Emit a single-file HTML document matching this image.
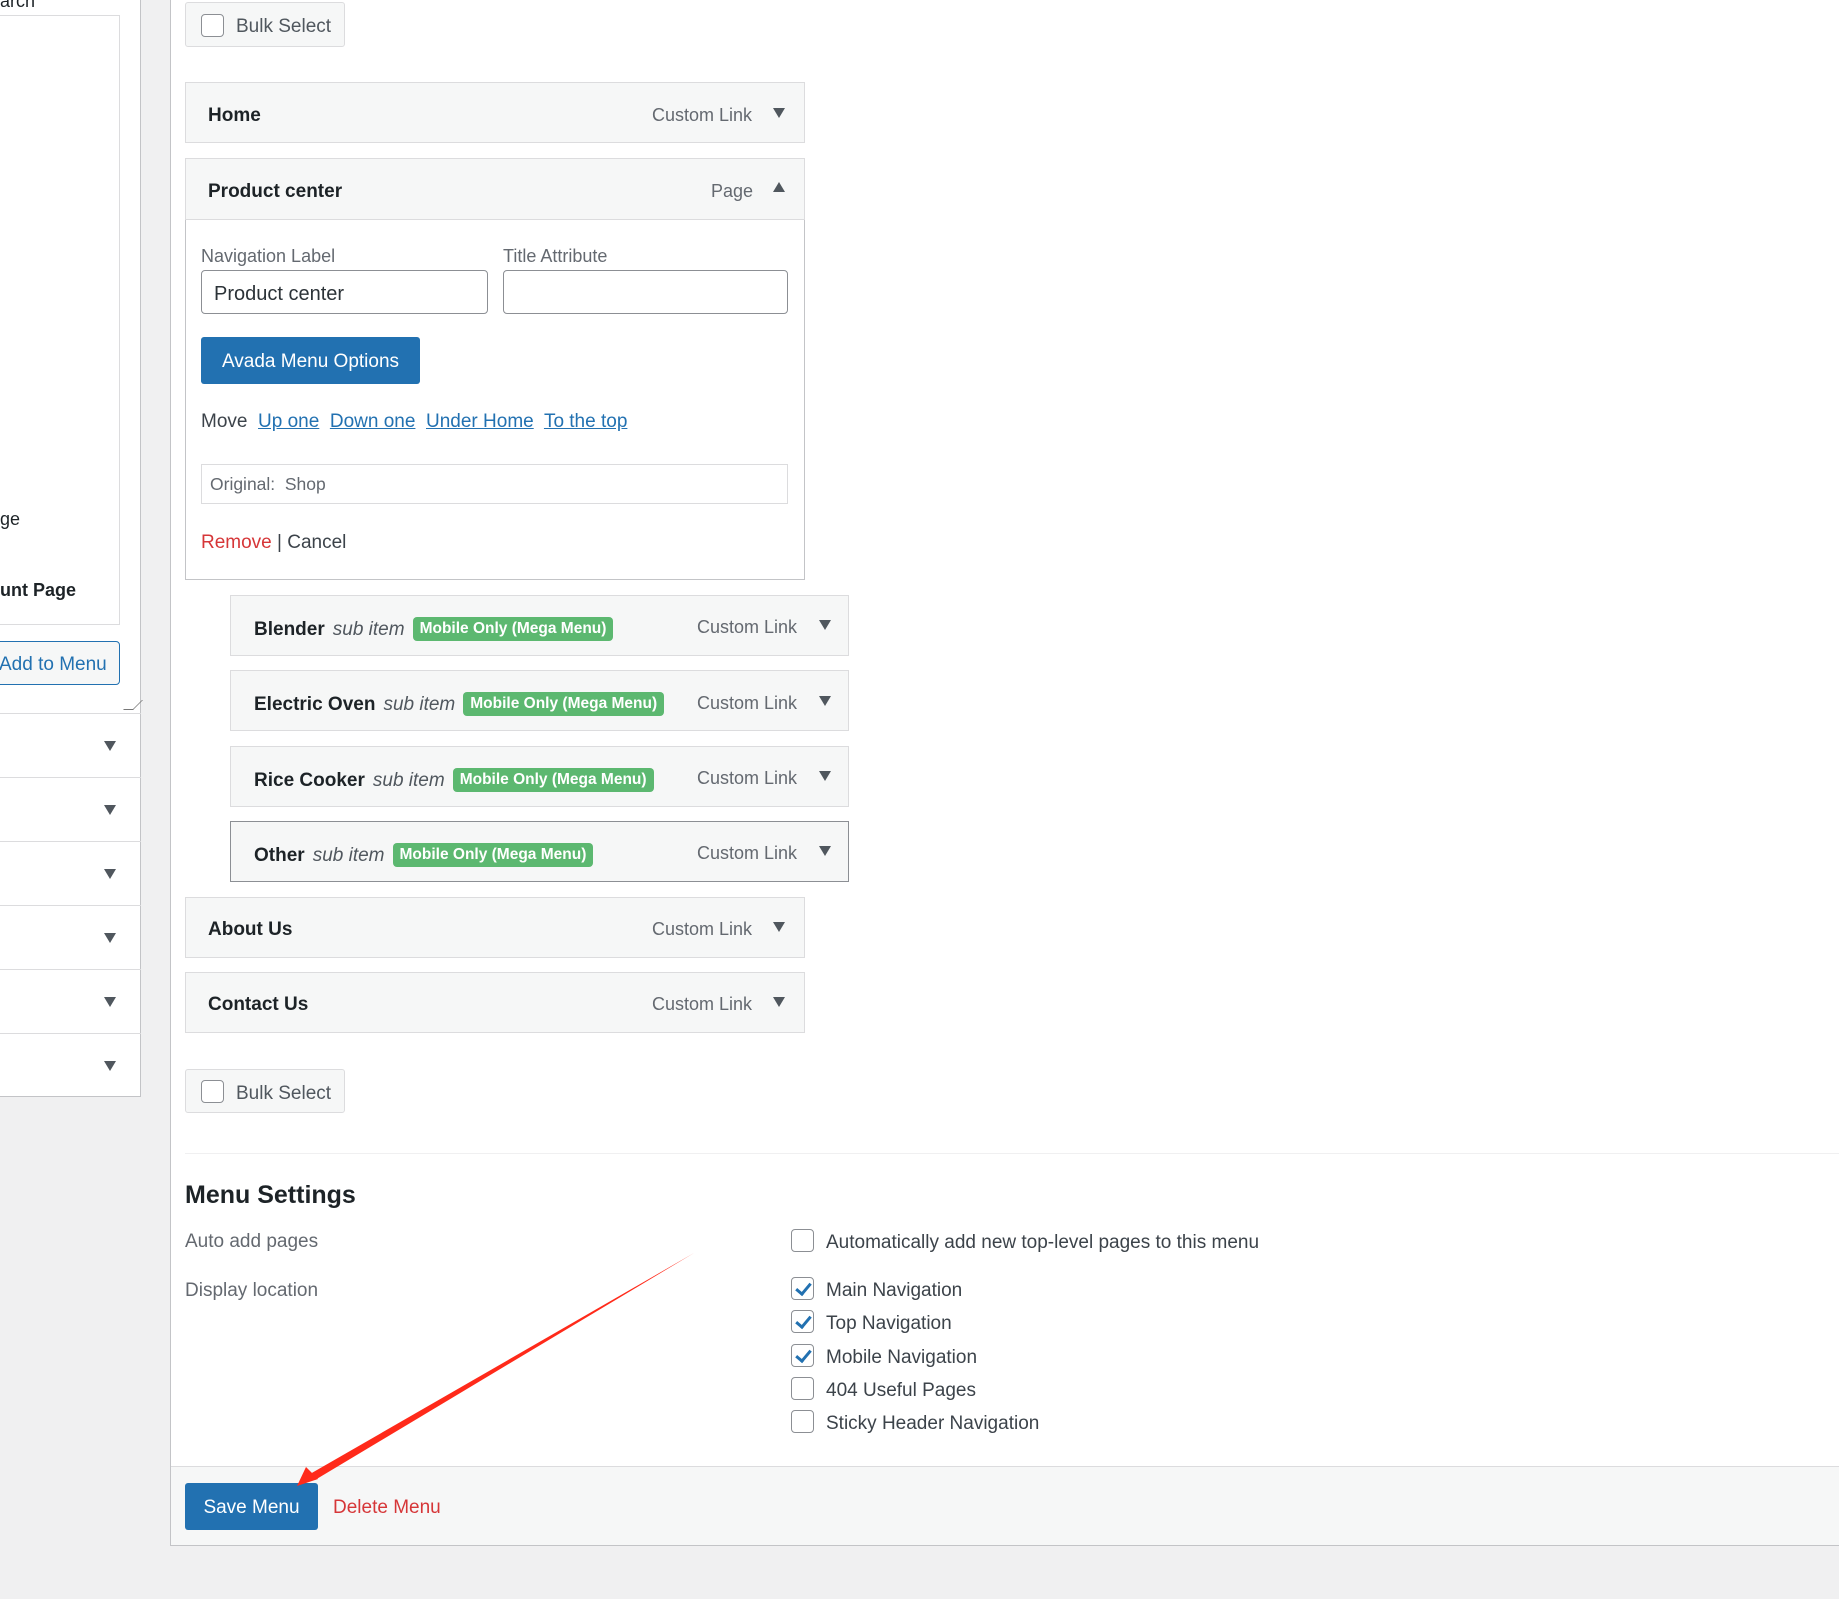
<!DOCTYPE html>
<html><head><meta charset="utf-8"><style>
*{box-sizing:border-box;margin:0;padding:0}
body{width:1839px;height:1599px;background:#f0f0f1;font-family:"Liberation Sans",sans-serif;color:#1d2327;position:relative;overflow:hidden;font-size:19px}
.a{position:absolute}
.t{transform:translateY(3px)}
.box{position:absolute;background:#f6f7f7;border:1px solid #dcdcde}
.ttl{position:absolute;font-weight:600;font-size:19px;color:#1d2327;transform:translateY(3px)}
.typ{position:absolute;color:#646970;font-size:18px;transform:translateY(2px)}
.arr{position:absolute;width:0;height:0;border-left:6px solid transparent;border-right:6px solid transparent;border-top:10px solid #50575e}
.up{border-top:0;border-bottom:10px solid #50575e}
.tag{display:inline-block;background:#5cb870;color:#fff;font-size:15.5px;font-weight:600;padding:3px 7px;border-radius:4px;vertical-align:2px;margin-left:8px}
.sub{font-style:italic;color:#50575e;font-weight:400;margin-left:8px}
.cb{position:absolute;width:23px;height:23px;border:1.5px solid #8c8f94;border-radius:4px;background:#fff}
.cb.on::after{content:"";position:absolute;left:7px;top:2px;width:6px;height:12px;border:solid #2271b1;border-width:0 3px 3px 0;transform:rotate(40deg)}
a{color:#2271b1}
</style></head><body>
<div class="a" style="left:0;top:0;width:141px;height:1097px;background:#fff;border-right:1px solid #c3c4c7;border-bottom:1px solid #c3c4c7"></div>
<div class="a" style="left:-2px;top:15px;width:122px;height:610px;border:1px solid #dcdcde;background:#fff"></div>
<div class="a t" style="left:0;top:-12px;font-size:18px;color:#1d2327">arch</div>
<div class="a t" style="left:0;top:506px;font-size:18px">ge</div>
<div class="a t" style="left:0;top:577px;font-size:18px;font-weight:600">unt Page</div>
<div class="a" style="left:-10px;top:641px;width:130px;height:44px;border:1px solid #2271b1;border-radius:4px;color:#2271b1;font-size:19px;line-height:46px;padding-left:8px;background:#f6f7f7">Add to Menu</div>
<div class="a" style="left:128px;top:700px;width:10px;height:10px;border-right:1px solid #777;border-bottom:1px solid #777;transform:skew(-45deg)"></div>
<div class="a" style="left:0;top:713px;width:141px;border-top:1px solid #dcdcde"></div>
<div class="a" style="left:0;top:777px;width:141px;border-top:1px solid #dcdcde"></div>
<div class="a" style="left:0;top:841px;width:141px;border-top:1px solid #dcdcde"></div>
<div class="a" style="left:0;top:905px;width:141px;border-top:1px solid #dcdcde"></div>
<div class="a" style="left:0;top:969px;width:141px;border-top:1px solid #dcdcde"></div>
<div class="a" style="left:0;top:1033px;width:141px;border-top:1px solid #dcdcde"></div>
<div class="arr" style="left:104px;top:741px"></div>
<div class="arr" style="left:104px;top:805px"></div>
<div class="arr" style="left:104px;top:869px"></div>
<div class="arr" style="left:104px;top:933px"></div>
<div class="arr" style="left:104px;top:997px"></div>
<div class="arr" style="left:104px;top:1061px"></div>

<div class="a" style="left:170px;top:0;width:1669px;height:1546px;background:#fff;border-left:1px solid #c3c4c7;border-bottom:1px solid #c3c4c7"></div>
<div class="box" style="left:185px;top:2px;width:160px;height:45px;border-radius:3px"></div>
<div class="cb" style="left:201px;top:14px"></div>
<div class="a t" style="left:236px;top:13px;color:#50575e">Bulk Select</div>

<div class="box" style="left:185px;top:82px;width:620px;height:61px"></div>
<div class="ttl" style="left:208px;top:102px">Home</div>
<div class="typ" style="left:652px;top:103px">Custom Link</div>
<div class="arr" style="left:773px;top:108px"></div>

<div class="box" style="left:185px;top:158px;width:620px;height:422px;background:#fff;border-color:#c3c4c7"></div>
<div class="box" style="left:185px;top:158px;width:620px;height:62px"></div>
<div class="ttl" style="left:208px;top:178px">Product center</div>
<div class="typ" style="left:711px;top:179px">Page</div>
<div class="arr up" style="left:773px;top:182px"></div>
<div class="a t" style="left:201px;top:243px;font-size:18px;color:#646970">Navigation Label</div>
<div class="a t" style="left:503px;top:243px;font-size:18px;color:#646970">Title Attribute</div>
<div class="a" style="left:201px;top:270px;width:287px;height:44px;border:1px solid #8c8f94;border-radius:4px;padding:12px 12px 0;font-size:20px;color:#2c3338">Product center</div>
<div class="a" style="left:503px;top:270px;width:285px;height:44px;border:1px solid #8c8f94;border-radius:4px"></div>
<div class="a" style="left:201px;top:337px;width:219px;height:47px;background:#2271b1;border-radius:3px;color:#fff;font-size:19px;line-height:50px;text-align:center">Avada Menu Options</div>
<div class="a t" style="left:201px;top:408px;font-size:19px;color:#3c434a">Move&nbsp; <a href="#">Up one</a>&nbsp; <a href="#">Down one</a>&nbsp; <a href="#">Under Home</a>&nbsp; <a href="#">To the top</a></div>
<div class="a" style="left:201px;top:464px;width:587px;height:40px;border:1px solid #dcdcde;padding:9px 8px 0;font-size:17.5px;color:#646970">Original:&nbsp; Shop</div>
<div class="a t" style="left:201px;top:529px;font-size:19px;color:#3c434a"><span style="color:#d63638">Remove</span> | Cancel</div>

<div class="box" style="left:230px;top:595px;width:619px;height:61px"></div>
<div class="ttl" style="left:254px;top:614px">Blender<span class="sub">sub item</span><span class="tag">Mobile Only (Mega Menu)</span></div>
<div class="typ" style="left:697px;top:615px">Custom Link</div><div class="arr" style="left:819px;top:620px"></div>
<div class="box" style="left:230px;top:670px;width:619px;height:61px"></div>
<div class="ttl" style="left:254px;top:689px">Electric Oven<span class="sub">sub item</span><span class="tag">Mobile Only (Mega Menu)</span></div>
<div class="typ" style="left:697px;top:691px">Custom Link</div><div class="arr" style="left:819px;top:696px"></div>
<div class="box" style="left:230px;top:746px;width:619px;height:61px"></div>
<div class="ttl" style="left:254px;top:765px">Rice Cooker<span class="sub">sub item</span><span class="tag">Mobile Only (Mega Menu)</span></div>
<div class="typ" style="left:697px;top:766px">Custom Link</div><div class="arr" style="left:819px;top:771px"></div>
<div class="box" style="left:230px;top:821px;width:619px;height:61px;border-color:#8c8f94"></div>
<div class="ttl" style="left:254px;top:840px">Other<span class="sub">sub item</span><span class="tag">Mobile Only (Mega Menu)</span></div>
<div class="typ" style="left:697px;top:841px">Custom Link</div><div class="arr" style="left:819px;top:846px"></div>

<div class="box" style="left:185px;top:897px;width:620px;height:61px"></div>
<div class="ttl" style="left:208px;top:916px">About Us</div>
<div class="typ" style="left:652px;top:917px">Custom Link</div><div class="arr" style="left:773px;top:922px"></div>
<div class="box" style="left:185px;top:972px;width:620px;height:61px"></div>
<div class="ttl" style="left:208px;top:991px">Contact Us</div>
<div class="typ" style="left:652px;top:992px">Custom Link</div><div class="arr" style="left:773px;top:997px"></div>

<div class="box" style="left:185px;top:1069px;width:160px;height:44px;border-radius:3px"></div>
<div class="cb" style="left:201px;top:1080px"></div>
<div class="a t" style="left:236px;top:1080px;color:#50575e">Bulk Select</div>

<div class="a" style="left:185px;top:1153px;width:1654px;border-top:1px solid #f0f0f1"></div>
<div class="a t" style="left:185px;top:1178px;font-size:25px;font-weight:600;color:#1d2327">Menu Settings</div>
<div class="a t" style="left:185px;top:1228px;font-size:19px;color:#646970">Auto add pages</div>
<div class="a t" style="left:185px;top:1277px;font-size:19px;color:#646970">Display location</div>
<div class="cb" style="left:791px;top:1229px"></div><div class="a t" style="left:826px;top:1229px;color:#3c434a">Automatically add new top-level pages to this menu</div>
<div class="cb on" style="left:791px;top:1277px"></div><div class="a t" style="left:826px;top:1277px;color:#3c434a">Main Navigation</div>
<div class="cb on" style="left:791px;top:1310px"></div><div class="a t" style="left:826px;top:1310px;color:#3c434a">Top Navigation</div>
<div class="cb on" style="left:791px;top:1344px"></div><div class="a t" style="left:826px;top:1344px;color:#3c434a">Mobile Navigation</div>
<div class="cb" style="left:791px;top:1377px"></div><div class="a t" style="left:826px;top:1377px;color:#3c434a">404 Useful Pages</div>
<div class="cb" style="left:791px;top:1410px"></div><div class="a t" style="left:826px;top:1410px;color:#3c434a">Sticky Header Navigation</div>

<div class="a" style="left:171px;top:1466px;width:1668px;height:80px;background:#f6f7f7;border-top:1px solid #dcdcde;border-bottom:1px solid #c3c4c7"></div>
<div class="a" style="left:185px;top:1483px;width:133px;height:47px;background:#2271b1;border-radius:3px;color:#fff;font-size:19px;line-height:49px;text-align:center">Save Menu</div>
<div class="a t" style="left:333px;top:1494px;color:#d63638;font-size:19px">Delete Menu</div>

<svg class="a" style="left:0;top:0" width="1839" height="1599">
<polygon points="694,1253 310,1474 315,1480" fill="#ff2a1a"/>
<polygon points="297,1486 306,1467 318,1479" fill="#ff2a1a"/>
</svg>
</body></html>
